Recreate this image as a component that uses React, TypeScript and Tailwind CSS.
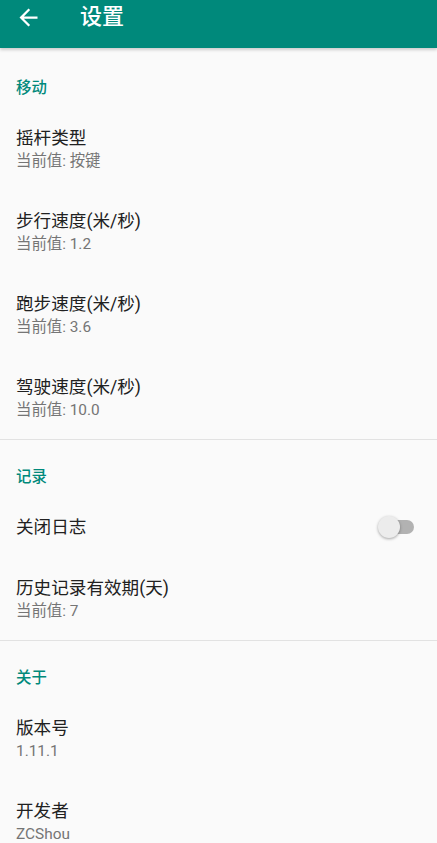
import React from 'react';

const font = { fontFamily: 'Roboto, "Noto Sans CJK SC", sans-serif' };

function Category({ title, first }: { title: string; first?: boolean }) {
  return (
    <div
      className={`${first ? 'pt-[30px]' : 'pt-[27px]'} pb-[9px] px-4 text-[15.4px] leading-5 font-medium text-[#00897b]`}
    >
      {title}
    </div>
  );
}

function Item({ title, summary }: { title: string; summary: string }) {
  return (
    <div className="h-[83px] px-4 flex flex-col justify-center">
      <div className="text-[17.6px] leading-6 text-[#212121]">{title}</div>
      <div className="text-[15.4px] leading-[22px] text-[#757575]">{summary}</div>
    </div>
  );
}

function SwitchItem({ title }: { title: string }) {
  return (
    <div className="h-[61px] pl-4 pr-[22px] flex items-center justify-between">
      <div className="text-[17.6px] leading-6 text-[#212121]">{title}</div>
      <div className="relative w-[37px] h-[22px] flex items-center">
        <div className="ml-[9px] w-[27px] h-[14px] rounded-full bg-[#b2b2b2]" />
        <div className="absolute left-0 top-0 w-[22px] h-[22px] rounded-full bg-[#ececec] shadow-[0_1px_3px_rgba(0,0,0,0.35)]" />
      </div>
    </div>
  );
}

function Divider() {
  return <div className="h-px bg-[#e2e2e2]" />;
}

export default function App() {
  return (
    <div className="w-[437px] h-[843px] overflow-hidden bg-[#fafafa]" style={font}>
      <div className="relative z-10 h-12 bg-[#00897b] flex items-center shadow-[0_2px_3px_rgba(0,0,0,0.18)]">
        <div className="w-[80px] pl-[15px] -mt-[14px]">
          <svg width="27" height="27" viewBox="0 0 24 24" fill="none">
            <path d="M20 11H7.83l5.59-5.59L12 4l-8 8 8 8 1.41-1.41L7.83 13H20v-2z" fill="#ffffff" />
          </svg>
        </div>
        <div className="text-white text-[22px] leading-7 font-medium -mt-[14px]">设置</div>
      </div>

      <Category title="移动" first />
      <Item title="摇杆类型" summary="当前值: 按键" />
      <Item title="步行速度(米/秒)" summary="当前值: 1.2" />
      <Item title="跑步速度(米/秒)" summary="当前值: 3.6" />
      <Item title="驾驶速度(米/秒)" summary="当前值: 10.0" />
      <Divider />

      <Category title="记录" />
      <SwitchItem title="关闭日志" />
      <Item title="历史记录有效期(天)" summary="当前值: 7" />
      <Divider />

      <Category title="关于" />
      <Item title="版本号" summary="1.11.1" />
      <Item title="开发者" summary="ZCShou" />
    </div>
  );
}
